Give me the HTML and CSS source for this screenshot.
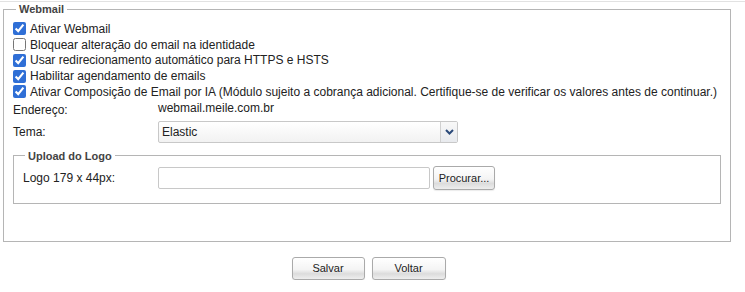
FILE: index.html
```html
<!DOCTYPE html>
<html lang="pt-BR">
<head>
    <meta charset="UTF-8">
    <title>Webmail</title>
    <link rel="stylesheet" href="styles.css">
</head>
<body>
    <div class="topline"></div>
    <fieldset class="box">
        <legend>Webmail</legend>
        <label class="check"><input type="checkbox" checked> Ativar Webmail</label>
        <label class="check"><input type="checkbox"> Bloquear alteração do email na identidade</label>
        <label class="check"><input type="checkbox" checked> Usar redirecionamento automático para HTTPS e HSTS</label>
        <label class="check"><input type="checkbox" checked> Habilitar agendamento de emails</label>
        <label class="check"><input type="checkbox" checked> Ativar Composição de Email por IA (Módulo sujeito a cobrança adicional. Certifique-se de verificar os valores antes de continuar.)</label>

        <div class="row row-addr">
            <span class="lbl">Endereço:</span>
            <span class="val">webmail.meile.com.br</span>
        </div>
        <div class="row row-tema">
            <span class="lbl">Tema:</span>
            <div class="select-wrap">
                <select class="sel">
                    <option>Elastic</option>
                </select>
                <span class="sel-arrow">
                    <svg width="9" height="6" viewBox="0 0 9 6"><path d="M1 1 L4.5 4.5 L8 1" fill="none" stroke="#2b4a7a" stroke-width="2"/></svg>
                </span>
            </div>
        </div>

        <fieldset class="box inner">
            <legend>Upload do Logo</legend>
            <div class="row row-logo">
                <span class="lbl">Logo 179 x 44px:</span>
                <input type="text" class="txt">
                <button class="btn btn-file">Procurar...</button>
            </div>
        </fieldset>
    </fieldset>

    <div class="actions">
        <button class="btn btn-big">Salvar</button>
        <button class="btn btn-big btn-voltar">Voltar</button>
    </div>
</body>
</html>
```

FILE: styles.css
```css
body {
    margin: 0;
    font-family: 'Liberation Sans', Arial, sans-serif;
    font-size: 12px;
    color: #222;
    background: #fff;
}
.topline {
    height: 1px;
    margin-top: 1px;
    background: #e2e2e2;
}
.box {
    margin: 0 14px 0 3px;
    padding: 5px 9px 37px 9px;
    border: 1px solid #b5b5b5;
    min-width: 0;
}
.box legend {
    font-size: 11px;
    font-weight: bold;
    line-height: 14px;
    color: #444;
    margin-left: 3px;
    padding: 0 3px;
}
.box.inner {
    margin: 6px 0 0 0;
    padding: 3px 9px 12px 9px;
}
.box.inner legend {
    margin-left: 2px;
}
.check {
    display: flex;
    align-items: center;
    height: 15.75px;
    line-height: 14px;
}
.check input {
    width: 13px;
    height: 13px;
    margin: 0 4px 0 0;
    accent-color: #2f6fd6;
}
.row {
    display: flex;
}
.row .lbl {
    width: 145px;
    flex: none;
}
.row-addr {
    height: 17px;
    line-height: 14px;
}
.row-addr .val {
    padding-top: 1px;
}
.row-addr .lbl {
    align-self: flex-end;
}
.row-tema {
    margin-top: 4px;
    align-items: center;
}
.select-wrap {
    position: relative;
    width: 300px;
    height: 22px;
}
.sel {
    appearance: none;
    width: 100%;
    height: 100%;
    margin: 0;
    padding: 0 20px 0 3px;
    border: 1px solid #c8c8c8;
    border-radius: 2px;
    background: linear-gradient(#ffffff, #f2f2f2);
    font-family: 'Liberation Sans', Arial, sans-serif;
    font-size: 12px;
    color: #222;
}
.sel-arrow {
    position: absolute;
    top: 1px;
    right: 1px;
    width: 16px;
    height: 20px;
    border-left: 1px solid #d0d0d0;
    background: linear-gradient(#f8f8f8, #e8eaee);
    display: flex;
    align-items: center;
    justify-content: center;
    pointer-events: none;
}
.row-logo {
    align-items: center;
    height: 25px;
}
.row-logo .lbl {
    width: 135px;
}
.txt {
    width: 272px;
    height: 22px;
    box-sizing: border-box;
    margin: 0 3px 1px 0;
    border: 1px solid #c8c8c8;
    border-radius: 2px;
    padding: 0 3px;
}
.btn {
    font-family: 'Liberation Sans', Arial, sans-serif;
    font-size: 11px;
    color: #222;
    border: 1px solid #aaa;
    border-radius: 3px;
    background: linear-gradient(#ffffff 0%, #f4f4f4 55%, #dcdcdc 75%, #eeeeee 100%);
    box-shadow: 0 1px 1px rgba(0,0,0,0.08);
    padding: 0;
    cursor: pointer;
}
.btn-file {
    width: 62px;
    height: 24px;
}
.actions {
    display: flex;
    justify-content: center;
    gap: 7px;
    margin: 15px 0 0 -8px;
}
.btn-big {
    width: 73px;
    height: 23px;
}
.btn-voltar {
    width: 74px;
}
```
